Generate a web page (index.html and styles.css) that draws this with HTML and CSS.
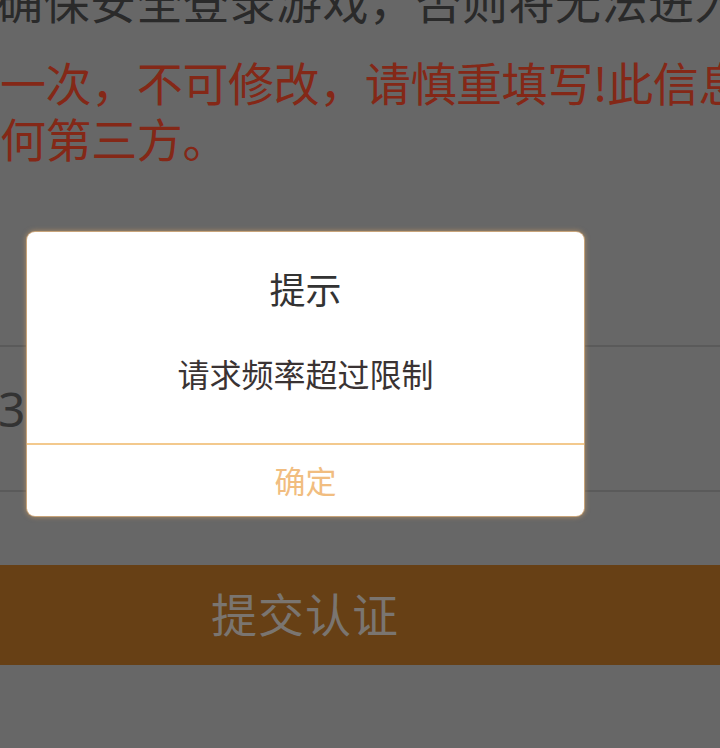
FILE: index.html
```html
<!DOCTYPE html>
<html lang="zh-CN">
<head>
<meta charset="utf-8">
<title>实名认证</title>
<link rel="stylesheet" href="styles.css">
</head>
<body>
<div class="screen">
  <div class="page">
    <p class="intro">确保安全登录游戏，否则将无法进入游戏。</p>
    <p class="warn">一次，不可修改，请慎重填写!此信息不会泄露给任<br>何第三方。</p>
    <div class="field field-name"></div>
    <div class="field field-id"><span class="value">320</span></div>
    <div class="submit">提交认证</div>
  </div>

  <div class="dialog">
    <div class="dialog-title">提示</div>
    <div class="dialog-msg">请求频率超过限制</div>
    <div class="dialog-btn">确定</div>
  </div>
</div>
</body>
</html>
```

FILE: styles.css
```css
html, body {
  margin: 0;
  padding: 0;
}
body {
  width: 720px;
  height: 748px;
  overflow: hidden;
  background: #676767;
  font-family: "Noto Sans CJK SC", "Noto Sans", sans-serif;
}
.screen {
  position: relative;
  width: 720px;
  height: 748px;
  overflow: hidden;
}
.page {
  display: flex;
  flex-direction: column;
}
.intro {
  margin: -29px 0 0 -3px;
  font-size: 46px;
  line-height: 56px;
  letter-spacing: 0.5px;
  color: #2a2a2a;
  white-space: nowrap;
}
.warn {
  margin: 26px 0 0 0;
  font-size: 46px;
  line-height: 56px;
  letter-spacing: -0.4px;
  color: #842817;
  white-space: nowrap;
}
.field {
  border-bottom: 2px solid #5a5a5a;
  box-sizing: border-box;
}
.field-name {
  height: 182px;
}
.field-id {
  height: 145px;
  display: flex;
  align-items: center;
  padding-bottom: 20px;
}
.value {
  font-family: "Noto Sans", sans-serif;
  font-size: 48px;
  color: #333333;
  margin-left: -2px;
}
.submit {
  margin-top: 73px;
  height: 100px;
  background: #674015;
  color: #7a7570;
  font-size: 46px;
  letter-spacing: 1px;
  line-height: 94px;
  text-align: center;
  padding-right: 110px;
  box-sizing: border-box;
}
.dialog {
  position: absolute;
  left: 27px;
  top: 232px;
  width: 557px;
  height: 284px;
  background: #ffffff;
  border-radius: 8px;
  box-shadow: 0 0 0 1px #c8a47a, 0 0 4px 2px rgba(190, 150, 100, 0.55);
  display: flex;
  flex-direction: column;
  text-align: center;
}
.dialog-title {
  margin-top: 34px;
  font-size: 36px;
  line-height: 44px;
  color: #333333;
}
.dialog-msg {
  margin-top: 41px;
  font-size: 32px;
  line-height: 44px;
  color: #3a3333;
  padding-bottom: 48px;
  border-bottom: 2px solid #f3c98d;
}
.dialog-btn {
  flex: 1;
  display: flex;
  align-items: center;
  justify-content: center;
  padding-bottom: 2px;
  font-size: 31px;
  color: #f1bd80;
}
```
